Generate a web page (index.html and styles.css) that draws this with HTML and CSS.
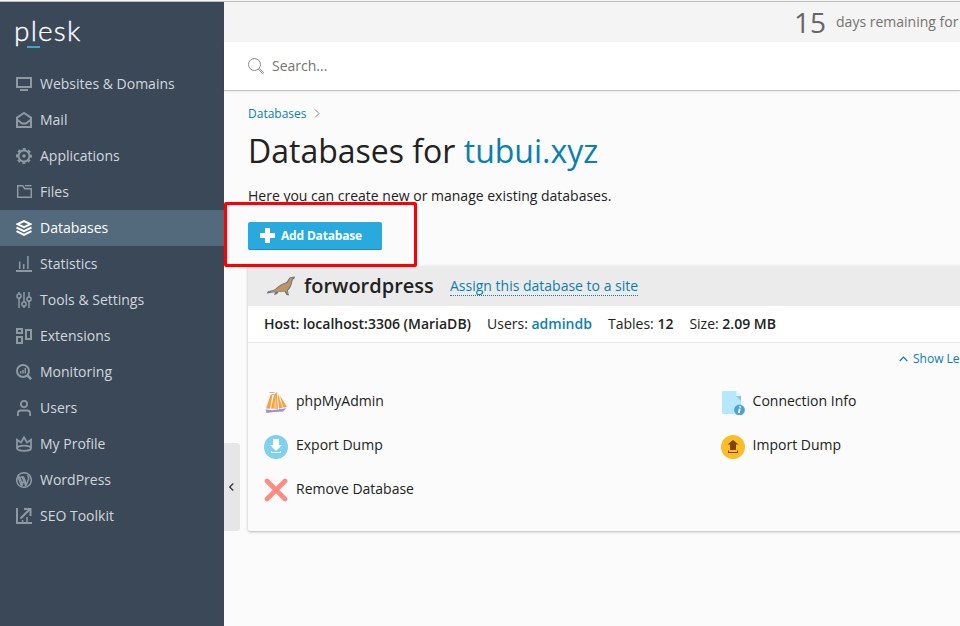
FILE: index.html
```html
<!DOCTYPE html>
<html lang="en">
<head>
<meta charset="utf-8">
<title>Databases for tubui.xyz</title>
<link rel="stylesheet" href="styles.css">
</head>
<body>
<div class="app">
  <aside class="sidebar">
    <div class="logo"><span class="logo-text">plesk</span><span class="logo-bar"></span></div>
    <nav class="nav">
      <a class="nav-item"><svg class="nav-icon" viewBox="0 0 16 16"><path d="M1 2h14v9H1z"/><path d="M4 14h8"/></svg><span>Websites &amp; Domains</span></a>
      <a class="nav-item"><svg class="nav-icon" viewBox="0 0 16 16"><path d="M1 5.600 8 1l7 4.600V15H1z"/><path d="m1 7.500 5 4h4l5-4"/></svg><span>Mail</span></a>
      <a class="nav-item"><svg class="nav-icon" viewBox="0 0 16 16"><circle cx="8" cy="8" r="5.500"/><circle cx="8" cy="8" r="7" stroke-dasharray="3 2.500" stroke-dashoffset="1.500"/><circle class="solid" cx="8" cy="8" r="1.800"/></svg><span>Applications</span></a>
      <a class="nav-item"><svg class="nav-icon thin" viewBox="0 0 16 16"><path d="M1.700 1.700h5l2 3h6.600v8.600H1.700z"/><path d="M9 1.700h6.500"/></svg><span>Files</span></a>
      <a class="nav-item active"><svg class="nav-icon" viewBox="0 0 16 16"><path d="m1.500 4.200 6.500-3 6.500 3-6.500 3z"/><path d="m.5 7.500 7.500 3.700 7.500-3.700M.5 11.200 8 14.900l7.500-3.700"/></svg><span>Databases</span></a>
      <a class="nav-item"><svg class="nav-icon" viewBox="0 0 16 16"><path d="M0 15h16"/><path class="thin" d="M3.700 13V5.500M7.700 13V8M11.900 13V0"/></svg><span>Statistics</span></a>
      <a class="nav-item"><svg class="nav-icon thin" viewBox="0 0 16 16"><path d="M3 0v2M3 6v10M8 0v10M8 14v2M13 0v5M13 9v7"/><circle cx="3" cy="4" r="2.100"/><circle cx="8" cy="12" r="2.100"/><circle cx="13" cy="7" r="2.100"/></svg><span>Tools &amp; Settings</span></a>
      <a class="nav-item"><svg class="nav-icon" viewBox="0 0 16 16"><path d="M1 1h5v4H1zM1 9h5v6H1zM10 2h5v9h-5z"/></svg><span>Extensions</span></a>
      <a class="nav-item"><svg class="nav-icon" viewBox="0 0 16 16"><circle cx="7" cy="7" r="6"/><path d="m11 11 4.200 4.200" stroke-width="2.600"/><path class="thin" d="M4.700 9.500V7M7 9.500V5.800M9.300 9.500V4"/></svg><span>Monitoring</span></a>
      <a class="nav-item"><svg class="nav-icon mid" viewBox="0 0 16 16"><circle cx="8" cy="4" r="3.100"/><path d="M1.900 16v-2.500q0-3 3-3h6.200q3 0 3 3V16"/></svg><span>Users</span></a>
      <a class="nav-item"><svg class="nav-icon mid" viewBox="0 0 16 16"><path d="M1 12.500V3.800l4 2.700L8 1.300l3 5.200 4-2.700v8.700"/><ellipse cx="8" cy="12.300" rx="7" ry="2.600"/></svg><span>My Profile</span></a>
      <a class="nav-item"><svg class="nav-icon thin" viewBox="0 0 16 16"><circle cx="8" cy="8" r="7.300"/><path d="m2 5 3.600 9M6.200 5l3.700 9M4.500 5H1.800M8 5H5M5.600 14 8.200 7.500M9.900 14l2.800-7.500c.4-1.300-1.200-2-.7-3.600"/><path d="m3.600 5 3 8M7.500 5l3 7.500"/></svg><span>WordPress</span></a>
      <a class="nav-item"><svg class="nav-icon" viewBox="0 0 16 16"><path d="M1 0v15h15"/><path d="M4.500 10.500 13.500 1.500M8 1h6.500v7"/><path class="thin" d="M6.600 15v-3M11 15V9"/></svg><span>SEO Toolkit</span></a>
    </nav>
  </aside>
  <div class="page">
    <div class="trial"><span class="trial-num">15</span><span class="trial-text">days remaining for</span></div>
    <div class="search"><svg class="search-icon" viewBox="0 0 16 16"><circle cx="6.500" cy="6.500" r="6"/><path d="m11.200 10.300 4.200 4.200q.2.900-.900.900l-4.200-4.200"/></svg><span>Search...</span></div>
    <main class="content">
      <div class="crumbs"><a>Databases</a><svg class="crumb-arrow" viewBox="0 0 6 9"><path d="m1 .5 4 4-4 4"/></svg></div>
      <h1><span>Databases for</span> <span class="h-link">tubui.xyz</span></h1>
      <p class="desc">Here you can create new or manage existing databases.</p>
      <button class="add"><svg class="plus" viewBox="0 0 15 15"><path d="M5 0h5v5h5v5h-5v5H5v-5H0V5h5z"/></svg><span>Add Database</span></button>
      <section class="card">
        <header class="card-head">
          <svg class="seal" viewBox="0 0 30 20"><path d="M1.500 17.500 3 15.300c3-.8 5.500-.8 7.500-2.500C14 9.500 17 7.500 20.500 6.500 23 5.500 23 2.500 25 1.300l5-.8-.5 2c-2 1-2 2.500-2.500 4.500-.7 3.500-2 5.500-4 7.500.2 1.500.5 3.500 1 5l-2.500-.5-2-3.500c-3 .5-4.500.5-6 .3-.5 1.700-2 3-4.500 3.200l1-2.500c-3 0-5 .5-8.500 1z"/><path class="seal-fill" d="M3.500 16C8 15.500 10.500 14 13 11.700c3-2.700 5.500-3.900 8.500-4.500 2.500-1 2.500-4 4-5.200l3-.5C26.500 3 26.500 5 26 7c-.7 3.200-2 5-4 7l1 4.500L20.500 15c-4 .8-6.500.5-9 .7z"/></svg>
          <h2>forwordpress</h2>
          <a class="assign">Assign this database to a site</a>
        </header>
        <div class="info">
          <span><b>Host: localhost:3306 (MariaDB)</b></span>
          <span>Users: <b class="blue">admindb</b></span>
          <span>Tables: <b>12</b></span>
          <span>Size: <b>2.09 MB</b></span>
        </div>
        <div class="less"><svg class="up" viewBox="0 0 9 6"><path d="m.7 5 3.800-4 3.800 4"/></svg><span>Show Le</span></div>
        <div class="tools">
          <a class="tool"><svg class="tool-icon" viewBox="0 0 24 24"><path fill="#f9a13e" d="M6.500 4 2 17.500l4 .2L8.500 4zM10 4 7 17.500l7 .3L12.800 1zM13.500 1l1.500 16.500 3.500-.5zM16 4.500 23 16l-4 .5z"/><path fill="#f7c58c" d="m12 4 .6 13-3-.2z"/><path fill="#9a91dc" d="m1.500 18.500 7 .7 14-2-3.500 3.300-9 .5-7.500 1z"/><path d="M5.500 1.500h5M7.500 3.500h3" stroke="#aaa" stroke-width=".8"/></svg><span>phpMyAdmin</span></a>
          <a class="tool"><svg class="tool-icon" viewBox="0 0 24 24"><path fill="#b5e8fd" d="M2 0h13l5 5v18H2q-1 0-1-1V1q0-1 1-1z"/><path fill="#dff5fd" d="m15 0 5 5h-5z"/><path fill="#8bc5db" d="M15 5h5v5z"/><circle cx="18.500" cy="19" r="5.400" fill="#4ca5d0"/><path d="m19.300 15.200-.3 1.300M18.700 17.600l-.9 4.400" stroke="#fff" stroke-width="1.800"/></svg><span>Connection Info</span></a>
          <a class="tool"><svg class="tool-icon" viewBox="0 0 24 24"><circle cx="12" cy="12" r="12" fill="#7fd1f0"/><path fill="#fff" d="M9 4h6v6h3l-6 6-6-6h3zM7 16h1v1h8v-1h1v2H7z"/></svg><span>Export Dump</span></a>
          <a class="tool"><svg class="tool-icon" viewBox="0 0 24 24"><circle cx="12" cy="12" r="12" fill="#fdbd26"/><path fill="#84400f" d="M9 15V9.500H6.500L12 5l5.500 4.500H15V15zM7 15.500h1V17h8v-1.500h1V18H7z"/></svg><span>Import Dump</span></a>
          <a class="tool"><svg class="tool-icon cross" viewBox="0 0 24 24"><path d="m3 3 18 18M21 3 3 21" stroke="#ff8b82" stroke-width="4.600" stroke-linecap="round"/></svg><span>Remove Database</span></a>
        </div>
      </section>
    </main>
  </div>
  <div class="collapse"><svg viewBox="0 0 5 8"><path d="m4.300.5-3.600 3.500 3.600 3.500"/></svg></div>
  <div class="highlight"></div>
</div>
</body>
</html>
```
FILE: styles.css
```css
* { box-sizing: border-box; }
body { margin: 0; font-family: "Open Sans", sans-serif; font-size: 14px; color: #222; background: #fbfbfb; }
svg { fill: none; flex: none; display: block; }
.app { position: relative; display: flex; height: 626px; overflow: hidden; white-space: nowrap; border-top: 1px solid #f7f7f7; }
.app::before { content: ""; position: absolute; left: 0; right: 0; top: 0; height: 1px; background: #bbb; }
.sidebar { width: 224px; flex: none; margin-top: 1px; background: #3a4858; }
.logo { height: 64px; padding: 11px 0 0 14px; color: #fff; }
.logo-text { display: block; font: 300 28px/34px Lato, sans-serif; letter-spacing: 1.200px; -webkit-text-stroke: .35px #fff; }
.logo-bar { display: block; width: 13px; height: 2px; margin: -1px 0 0 13px; background: #37a8cb; }
.nav-item { display: flex; align-items: center; height: 36px; padding-left: 16px; gap: 8px; color: #d3d7dc; font-weight: 500; line-height: 20px; }
.nav-icon { width: 16px; height: 16px; stroke: #8f99a4; stroke-width: 2; }
.nav-icon.thin, .thin { stroke-width: 1.500; }
.nav-icon.mid { stroke-width: 1.800; }
.solid { fill: #8f99a4; stroke: none; }
.active { background: #536a7c; color: #fff; }
.active .nav-icon { stroke: #fff; }
.page { flex: 1; min-width: 0; margin-top: 1px; }
.trial { display: flex; align-items: center; height: 40px; padding-left: 570px; gap: 10px; background: #f4f4f4; color: #737373; }
.trial-num { font-size: 28px; line-height: 40px; color: #666; }
.trial-text { padding-bottom: 2px; }
.search { display: flex; align-items: center; height: 49px; padding-left: 24px; gap: 8px; background: #fff; color: #737373; border-bottom: 1px solid #c4c4c4; box-shadow: 0 1px 2px #0001; }
.search span { padding-bottom: 2px; }
.search-icon { width: 16px; height: 16px; stroke: #888; }
.content { padding: 12px 0 0 24px; }
.crumbs { display: flex; align-items: center; height: 20px; gap: 7px; font-size: 12px; color: #0a7fb0; }
.crumb-arrow { width: 6px; height: 9px; stroke: #888; }
h1 { margin: 8px 0 0; font-size: 32px; font-weight: 400; line-height: 40px; color: #222; }
.h-link { color: #0a7fb0; }
.desc { margin: 15px 0 0; line-height: 20px; }
.add { display: flex; align-items: center; width: 134px; height: 28px; margin: 16px 0; padding: 0 0 0 12px; gap: 6px; border: 0; border-bottom: 1px solid #1f8dbb; border-radius: 2px; background: #28aade; color: #fff; font: 700 12px/20px "Open Sans", sans-serif; letter-spacing: -.17px; }
.plus { width: 15px; height: 15px; fill: #fff; }
.card { width: 760px; height: 265px; border-radius: 2px; box-shadow: 0 1px 3px #0004; background: #fbfbfb; }
.card-head { display: flex; align-items: center; height: 40px; padding-left: 17px; background: #ebebeb; }
.seal { width: 30px; height: 20px; margin-right: 9px; fill: #6b7484; }
.seal-fill { fill: #c09462; }
h2 { margin: 0; width: 146px; font-size: 20px; font-weight: 600; line-height: 28px; }
.assign { color: #0a7fb0; line-height: 18px; border-bottom: 1px dotted #0a7fb0; }
.info { display: flex; align-items: center; height: 37px; padding: 0 0 2px 16px; gap: 16px; background: #fff; border-bottom: 1px solid #e8e8e8; }
b { font-weight: 600; }
.blue { color: #0a7fb0; }
.less { display: flex; align-items: center; height: 32px; padding-left: 651px; gap: 5px; font-size: 12px; color: #0a7fb0; }
.less span { padding-bottom: 1px; }
.up { width: 9px; height: 6px; stroke: #0a7fb0; stroke-width: 1.200; }
.tools { display: grid; grid-template-columns: 456.600px 1fr; grid-auto-rows: 44px; padding: 4px 0 0 16px; }
.tool { display: flex; align-items: center; gap: 8px; }
.tool span { padding-bottom: 2px; }
.tool-icon { width: 24px; height: 24px; margin-top: 4px; }
.tool-icon.cross { margin-top: 2px; }
.collapse { position: absolute; left: 224px; top: 442px; width: 16px; height: 88px; display: flex; align-items: center; padding-left: 5px; border-radius: 0 3px 3px 0; background: #e6e6e6; }
.collapse svg { width: 5px; height: 8px; stroke: #333; stroke-width: 1.200; }
.highlight { position: absolute; left: 224px; top: 201px; width: 193px; height: 65px; border: 3px solid #f00; border-radius: 2px; }
```
